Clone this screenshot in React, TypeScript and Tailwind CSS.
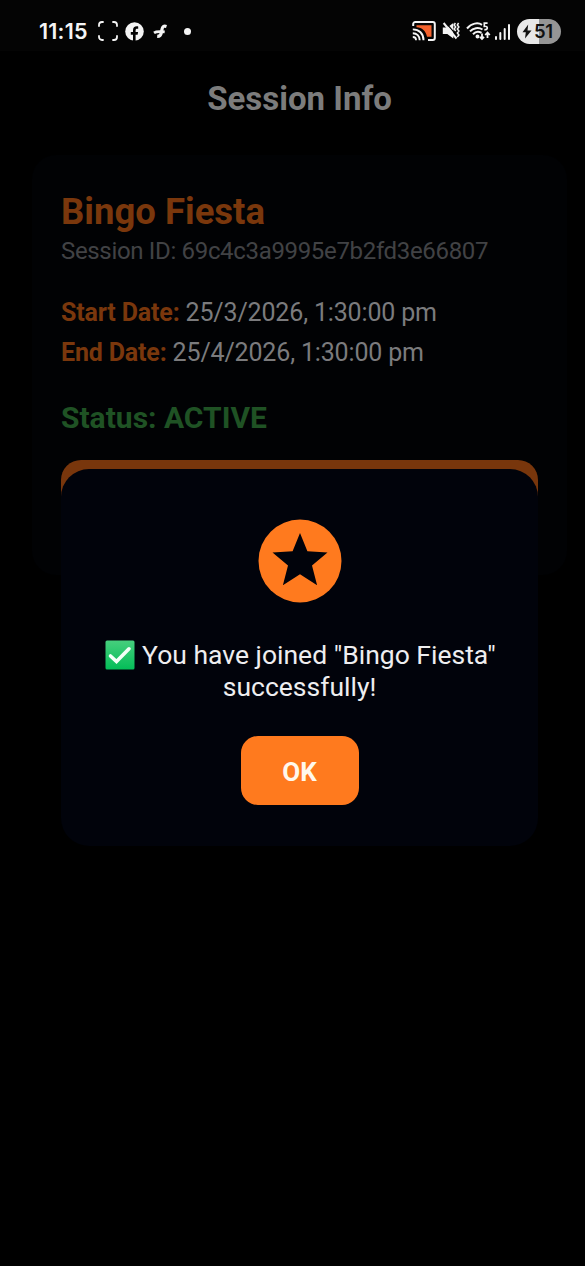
import React from 'react';

const StatusBar: React.FC = () => (
  <div className="flex h-[51px] items-center bg-[#040404] pt-[11px] pl-[39px] text-[#f4f4f4]">
    <span className="w-[50px] whitespace-nowrap font-[Inter,sans-serif] text-[21.5px] leading-6 font-semibold tracking-[0.2px]">11:15</span>

    {/* Notifications */}
    <svg className="ml-[9px] h-5 w-5" viewBox="0 0 20 20" fill="none" stroke="currentColor" strokeWidth="1.8" strokeLinecap="round">
      <path d="M1 5V4a3 3 0 0 1 3-3h1M15 1h1a3 3 0 0 1 3 3v1M19 15v1a3 3 0 0 1-3 3h-1M5 19H4a3 3 0 0 1-3-3v-1" />
    </svg>
    <svg className="ml-[7px] h-[19px] w-[19px]" viewBox="0 0 19 19">
      <circle cx="9.5" cy="9.5" r="9.3" fill="currentColor" />
      <path d="M8 19v-6.3H5.8V9.9H8V8.4c0-2.8 1.3-4.1 3.9-4.1.5 0 1 .1 1.3.1v2.4h-1c-1.2 0-1.6.5-1.6 1.6v1.5h2.5l-.5 2.8h-2V19z" fill="#040404" />
    </svg>
    <svg className="ml-[9px] h-[15px] w-[15px]" viewBox="0 0 15 15" fill="none" stroke="currentColor">
      <path d="M13.5 2.4c-2.8-.9-4 .2-4.500 2.900l-.6 3.200c-.5 2.800-1.700 4-4.200 3.900" strokeWidth="3.2" />
      <path d="M1 8.800c2.500-1.700 5.500-1.500 10.700-.9" strokeWidth="2.8" />
    </svg>
    <span className="ml-[16px] h-[7px] w-[7px] rounded-full bg-[#f4f4f4]" />

    {/* Screen cast */}
    <svg className="ml-[221px] h-[20px] w-[24px]" viewBox="0 0 24 20" fill="none">
      <path d="M4.500 4.200h15v11.600h-4.500C14 10 10 6.300 4.500 6.200z" fill="#f4622d" />
      <path d="M1.200 5V3a2 2 0 0 1 2-2h17.600a2 2 0 0 1 2 2v14a2 2 0 0 1-2 2H16" stroke="#f4f4f4" strokeWidth="2" />
      <path d="M.8 8.400c6.300 0 10.700 4 10.700 10.800M.8 12.300c4 0 6.900 2.600 6.900 6.900M.8 16c2.100 0 3.200 1.200 3.200 3.200" stroke="#f4f4f4" strokeWidth="1.900" />
    </svg>
    {/* Vibrate */}
    <svg className="ml-[6px] h-[18px] w-[18px]" viewBox="0 0 18 18" fill="none" stroke="currentColor">
      <path d="M.8 5.500h4.500l6-4.500v15.500l-6-4.500H.8z" fill="currentColor" stroke="none" />
      <path d="m4 .8 11.500 13.600" stroke="#040404" strokeWidth="1.200" />
      <path d="M1.600 1 14.500 16.500" strokeWidth="2" />
      <path d="m13.400 1-1.300 2 1.600 2-1.600 2 1.600 2M16.600 1l-1.300 2 1.600 2-1.600 2 1.600 2-1.600 2 1.600 2-1.600 2" strokeWidth="1.500" />
    </svg>
    {/* Wi-Fi */}
    <svg className="ml-[6px] h-[19px] w-[25px]" viewBox="0 0 25 19" fill="none" stroke="currentColor" strokeWidth="2">
      <path d="M1 6.500C5.500 1.100 12 .1 16 2.800M4 9.400C7 6 12.500 5 16.500 7.500M7 12.200c2.400-2.600 5.700-3 8.500-1.300" />
      <circle cx="11.500" cy="14.600" r="1" fill="currentColor" />
      <path d="M21.600 1.200h-3.300v3.100c3.900-.6 4 3.900 0 3.300" strokeWidth="1.700" />
      <path d="M16 11.500V17m-2-2.200 2 2.200 2-2.200M21.500 16v-5.500m-2.300 2.500 2.300-2.500 2.300 2.500" strokeWidth="1.800" />
    </svg>
    {/* Signal */}
    <svg className="ml-[4px] h-[17px] w-[16px]" viewBox="0 0 16 17" fill="currentColor">
      <rect x="0" y="13" width="2" height="4" rx="1" />
      <rect x="4.300" y="9" width="2" height="8" rx="1" />
      <rect x="8.700" y="5" width="2" height="12" rx="1" />
      <rect x="13" y="1" width="2" height="16" rx="1" />
    </svg>
    {/* Battery */}
    <div className="ml-[6px] flex h-[25px] w-[44px] items-center rounded-full bg-linear-to-r from-[#e8e8e8] from-50% to-[#959595] to-50% pl-[5px] text-[#111]">
      <svg className="h-[15px] w-[10px]" viewBox="0 0 10 15" fill="currentColor">
        <path d="M6.200.5.500 8.300h3.300L3 14.500l6.500-8H5.500z" />
      </svg>
      <span className="ml-[2px] font-[Inter,sans-serif] text-[18.5px] leading-6 font-semibold tracking-[-0.3px]">51</span>
    </div>
  </div>
);

const SessionCard: React.FC = () => (
  <div className="mt-[35px] mr-[18px] ml-8 h-[420px] rounded-[24px] bg-[#010204] px-[29px] pt-[36px]">
    <h2 className="text-[36.5px] leading-[42px] font-bold whitespace-nowrap text-[#7a370c]">Bingo Fiesta</h2>
    <p className="mt-px text-[24px] leading-[34px] tracking-[-0.33px] whitespace-nowrap text-[#414245]">Session ID: 69c4c3a9995e7b2fd3e66807</p>
    <p className="mt-[25px] text-[25px] leading-[40px] tracking-[-0.16px] whitespace-nowrap text-[#7b7b7d]">
      <span className="font-bold text-[#7a370c]">Start Date:</span> 25/3/2026, 1:30:00 pm
    </p>
    <p className="text-[25px] leading-[40px] tracking-[-0.16px] whitespace-nowrap text-[#7b7b7d]">
      <span className="font-bold text-[#7a370c]">End Date:</span> 25/4/2026, 1:30:00 pm
    </p>
    <p className="mt-[27px] text-[30px] leading-[36px] font-bold whitespace-nowrap text-[#1f5224]">Status: ACTIVE</p>
    {/* Join button, mostly covered by the modal */}
    <div className="mt-[24px] h-[72px] rounded-[20px] bg-[#78360c]" />
  </div>
);

const JoinedModal: React.FC = () => (
  <div className="absolute top-[469px] left-[61px] flex h-[377px] w-[477px] flex-col items-center rounded-[28px] bg-[#01030b] pt-[50px]">
    <svg className="h-[84px] w-[84px]" viewBox="0 0 84 84">
      <circle cx="42" cy="42" r="41.5" fill="#ff7a1e" />
      <path d="M42 14 49.400 32.300 69.500 33.500 54 46.400 59.100 66.300 42 55.300 24.900 66.300 30 46.400 14.500 33.500 34.600 32.300z" fill="#01030b" />
    </svg>
    <div className="mt-[36px] text-center text-[26.5px] leading-[32px] whitespace-nowrap text-[#eeeef0]">
      <p className="flex items-center justify-center pl-[2px]">
        <svg className="mr-[7px] h-[30px] w-[30px]" viewBox="0 0 30 30">
          <defs>
            <linearGradient id="check-bg" x1="0" y1="0" x2="0" y2="1">
              <stop offset="0" stopColor="#46cf7d" />
              <stop offset="1" stopColor="#04bd58" />
            </linearGradient>
          </defs>
          <rect x=".5" y=".5" width="29" height="29" rx="1.5" fill="url(#check-bg)" />
          <path d="m5.500 16 6 5.500L24 8.800" fill="none" stroke="#f3fff7" strokeWidth="3.6" strokeLinecap="round" />
        </svg>
        You have joined "Bingo Fiesta"
      </p>
      <p>successfully!</p>
    </div>
    <button className="mt-[33px] h-[69px] w-[118px] rounded-[17px] bg-[#ff7a1e] pt-[3px] text-[26px] font-bold text-[#fff8ec]">OK</button>
  </div>
);

const App: React.FC = () => {
  return (
    <div className="relative h-[1266px] w-[585px] overflow-hidden bg-black font-[Roboto,sans-serif]">
      <StatusBar />
      <h1 className="mt-[27px] text-center text-[33px] leading-[42px] font-bold text-[#7c7c7c]">
        <span className="ml-[14px]">Session Info</span>
      </h1>
      <SessionCard />
      <JoinedModal />
    </div>
  );
};

export default App;
